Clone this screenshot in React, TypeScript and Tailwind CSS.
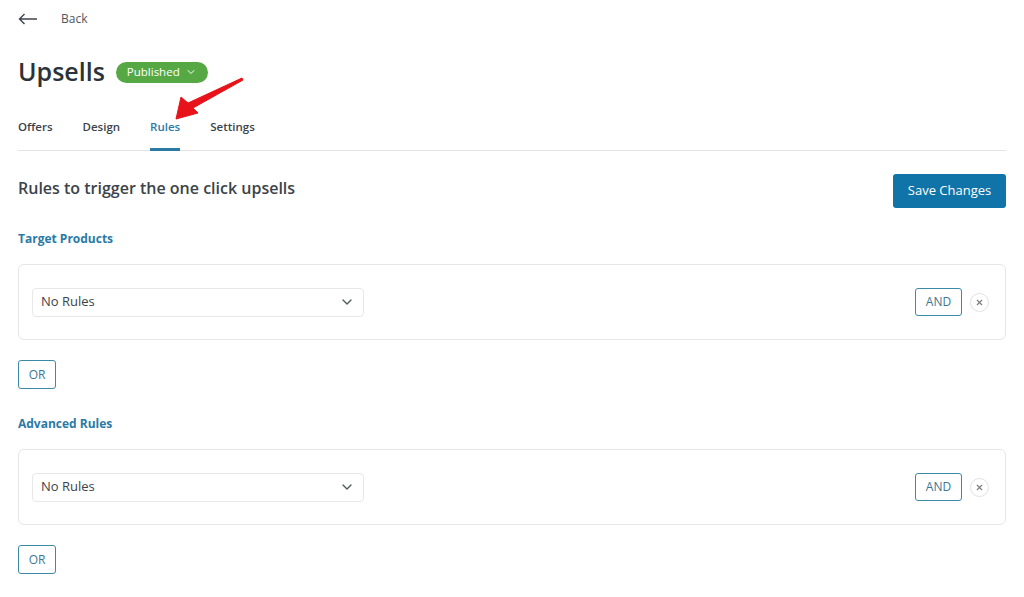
import { ChevronDown, X } from 'lucide-react'

const font = { fontFamily: '"Open Sans", "Noto Sans", sans-serif' }

function RuleGroup({ title }: { title: string }) {
  return (
    <div>
      <h3 className="text-[12px] font-bold text-[#2b7aa6] leading-4">{title}</h3>
      <div className="mt-[17px] h-[76px] rounded-[6px] border border-[#e6e6e6] px-[13px] flex items-center justify-between">
        <div className="w-[332px] h-[29px] rounded-[4px] border border-[#e8e8e8] flex items-center justify-between pl-[8px] pr-[8px]">
          <span className="text-[13px] text-[#3c434a]">No Rules</span>
          <ChevronDown className="h-4 w-4 text-[#50575e]" strokeWidth={2} />
        </div>
        <div className="flex items-center gap-[8px] pr-[3px]">
          <button className="h-[28px] w-[47px] rounded-[3px] border border-[#3d8aa8] text-[12px] text-[#3d7893]">AND</button>
          <div className="h-[19px] w-[19px] rounded-full border border-[#e2e2e2] flex items-center justify-center">
            <X className="h-[9px] w-[9px] text-[#7a7a7a]" strokeWidth={3} />
          </div>
        </div>
      </div>
      <button className="mt-[20px] h-[29px] w-[38px] rounded-[3px] border border-[#3d8aa8] text-[12px] text-[#3d7893]">OR</button>
    </div>
  )
}

export default function App() {
  return (
    <div className="relative w-[1024px] h-[597px] bg-white overflow-hidden" style={font}>
      <div className="px-[18px]">
        {/* Back */}
        <div className="flex items-center h-[18px] mt-[10px] gap-[23px]">
          <svg width="20" height="12" viewBox="0 0 20 12" fill="none" stroke="#3c434a" strokeWidth="1.4">
            <path d="M19 6H1.5M6.5 1L1.5 6l5 5" />
          </svg>
          <span className="text-[12px] text-[#50575e]">Back</span>
        </div>

        {/* Title */}
        <div className="flex items-center mt-[27px] gap-[11px]">
          <h1 className="text-[25px] font-semibold text-[#2c3338] leading-8">Upsells</h1>
          <div className="h-[21px] px-[11px] rounded-full bg-[#56a845] flex items-center gap-[5px] mt-[2px]">
            <span className="text-[11.5px] text-white">Published</span>
            <ChevronDown className="h-3 w-3 text-white" strokeWidth={2} />
          </div>
        </div>

        {/* Tabs */}
        <div className="mt-[32px] flex gap-[30px] border-b border-[#e2e4e7] h-[32px]">
          <span className="text-[11.5px] font-semibold text-[#3c434a] leading-4">Offers</span>
          <span className="text-[11.5px] font-semibold text-[#3c434a] leading-4">Design</span>
          <span className="text-[11.5px] font-semibold text-[#2b7aa6] leading-4 border-b-[3px] border-[#2b7aa6] h-[32px] -mb-px">Rules</span>
          <span className="text-[11.5px] font-semibold text-[#3c434a] leading-4">Settings</span>
        </div>

        {/* Heading row */}
        <div className="mt-[23px] flex items-start justify-between">
          <h2 className="text-[16px] font-semibold text-[#3c434a] leading-6 mt-[2px]">Rules to trigger the one click upsells</h2>
          <button className="h-[34px] w-[113px] rounded-[3px] bg-[#1174a8] text-[13px] text-white">Save Changes</button>
        </div>

        <div className="mt-[23px] flex flex-col gap-[27px]">
          <RuleGroup title="Target Products" />
          <RuleGroup title="Advanced Rules" />
        </div>
      </div>

      {/* Red annotation arrow */}
      <svg className="absolute left-0 top-0 pointer-events-none" width="300" height="160">
        <polygon
          points="242,78 243,80 193,108 198,113 176,119 181,97 188,103"
          fill="#e8131a"
          stroke="#e8131a"
          strokeWidth="1"
          strokeLinejoin="round"
        />
      </svg>
    </div>
  )
}
